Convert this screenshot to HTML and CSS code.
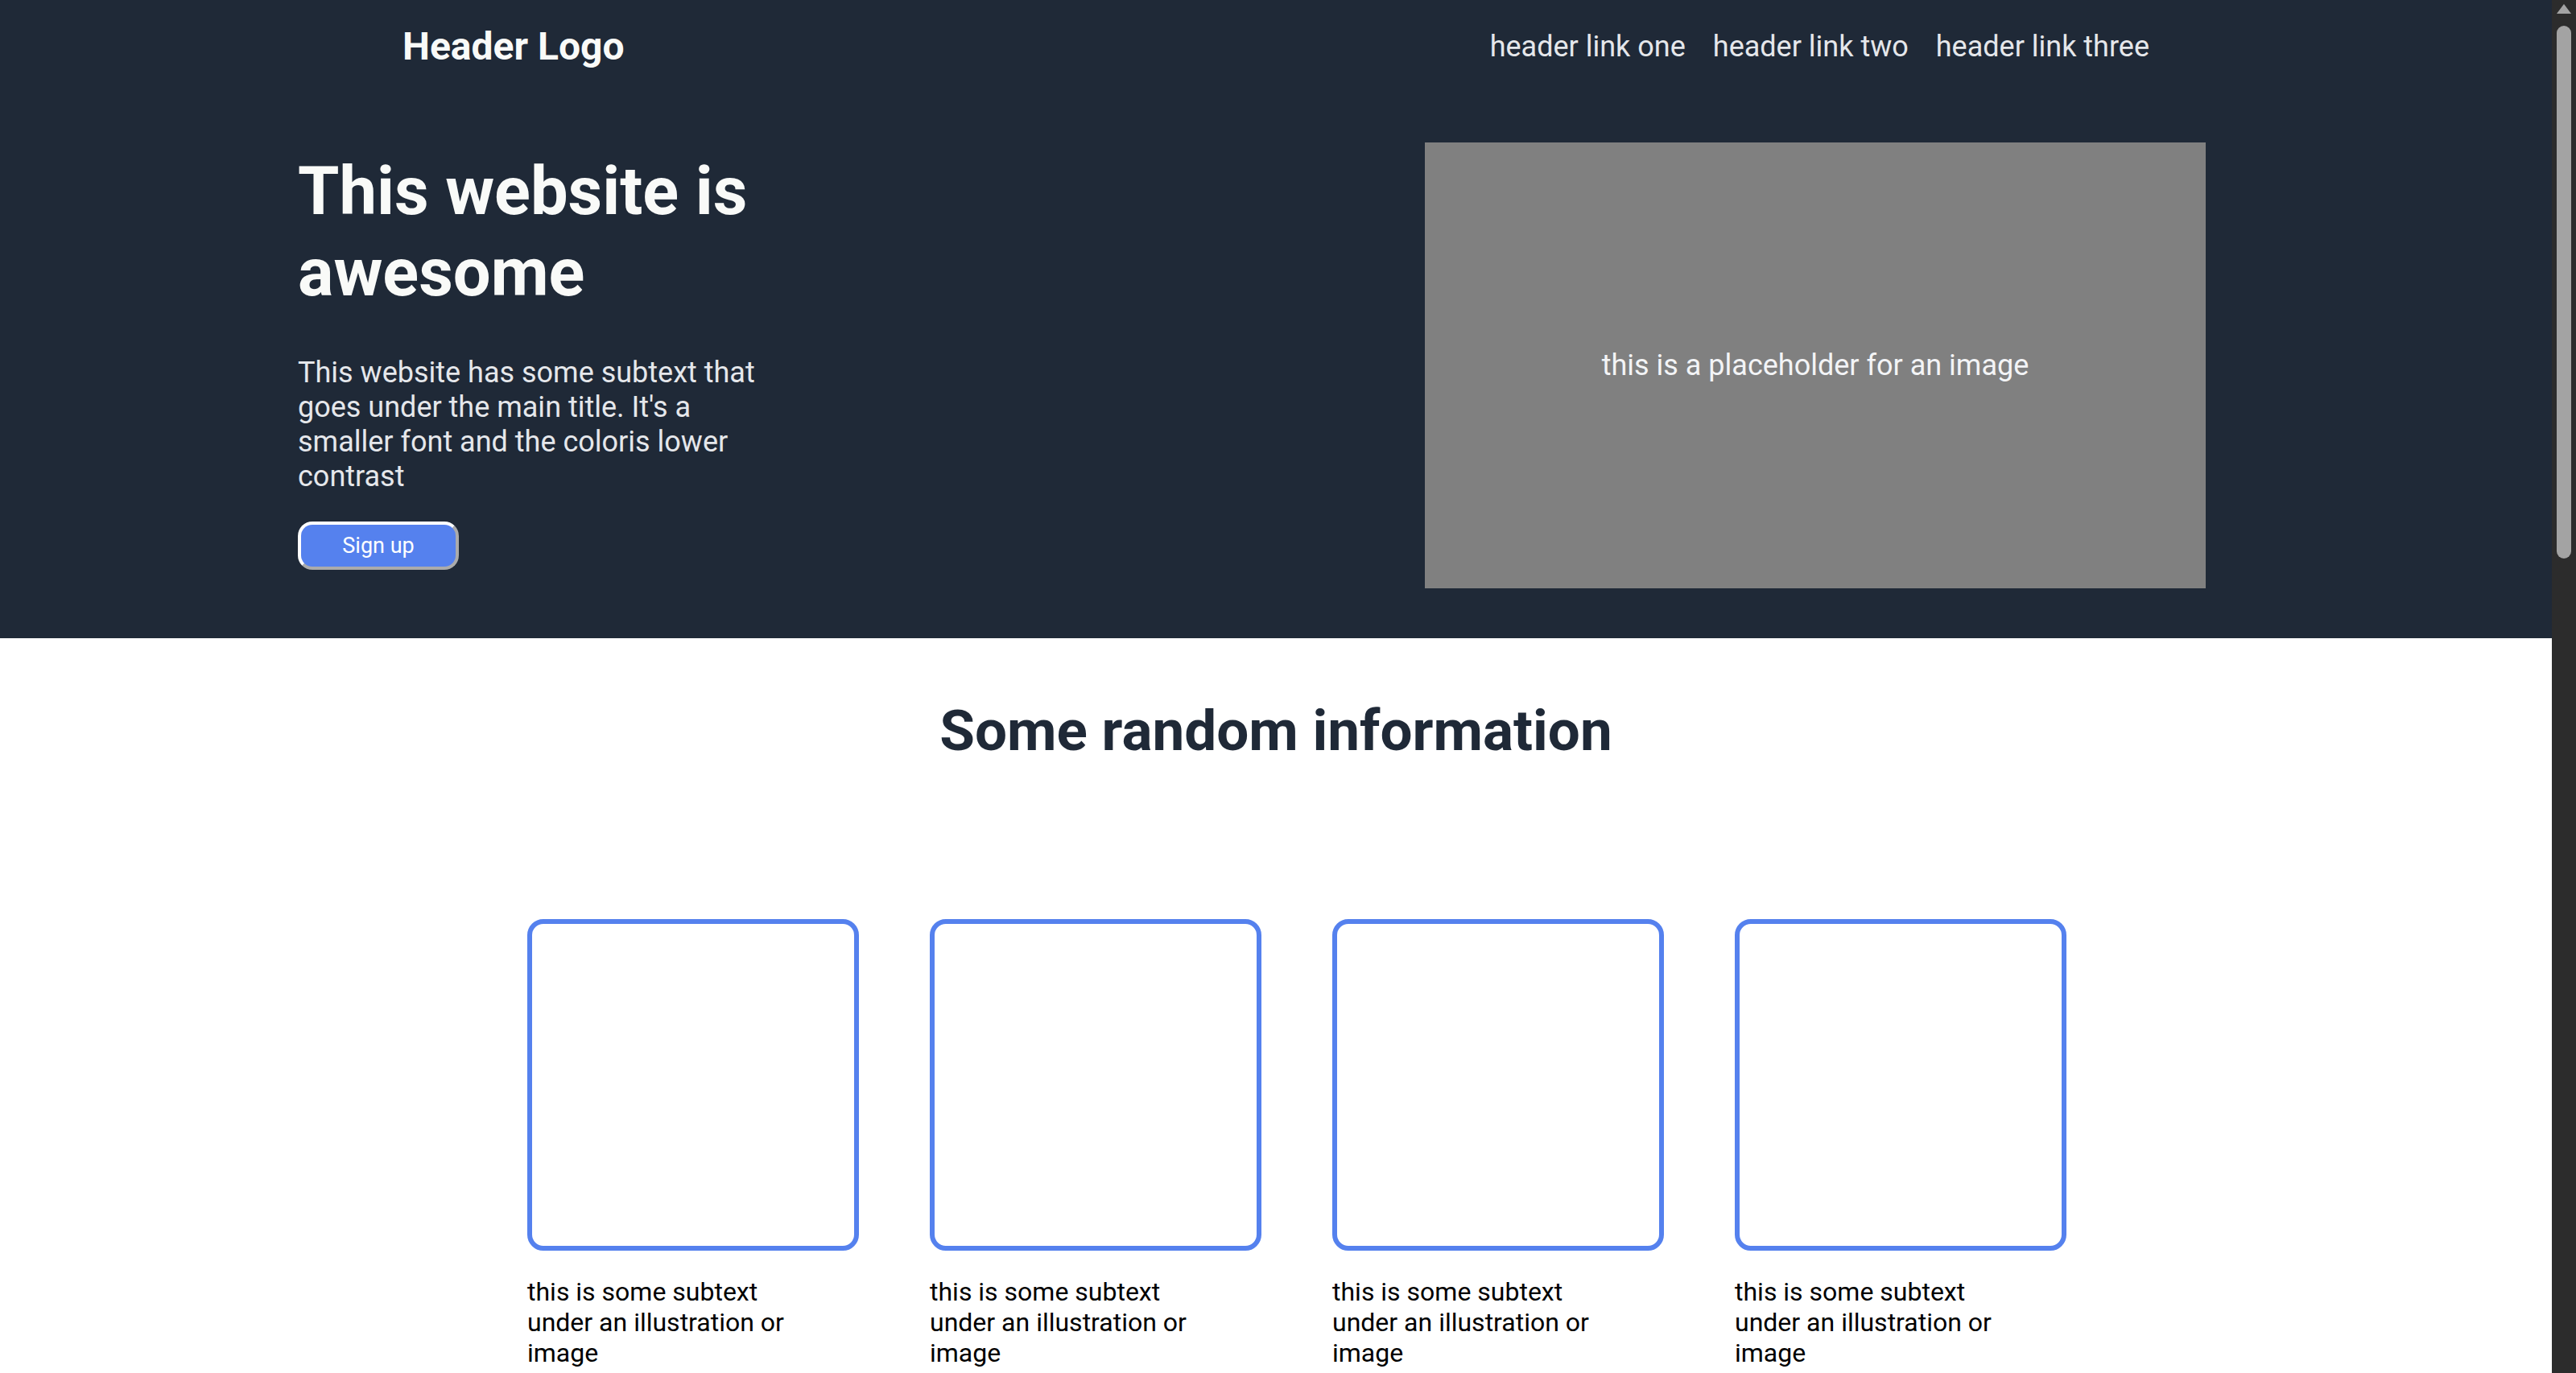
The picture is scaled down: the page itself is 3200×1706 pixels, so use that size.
FILE: index.html
```html
<!DOCTYPE html>
<html lang="en">
<head>
<meta charset="utf-8">
<title>Landing Page</title>
<link rel="stylesheet" href="styles.css">
</head>
<body>
<header class="site-header">
  <div class="header-inner">
    <div class="logo">Header Logo</div>
    <nav class="nav">
      <a href="#" class="nav-link">header link one</a>
      <a href="#" class="nav-link">header link two</a>
      <a href="#" class="nav-link">header link three</a>
    </nav>
  </div>
</header>

<section class="hero">
  <div class="hero-inner">
    <div class="hero-text">
      <h1 class="hero-title">This website is awesome</h1>
      <p class="hero-sub">This website has some subtext that goes under the main title. It's a smaller font and the coloris lower contrast</p>
      <button class="btn" type="button">Sign up</button>
    </div>
    <div class="hero-image">this is a placeholder for an image</div>
  </div>
</section>

<section class="info">
  <h2 class="info-title">Some random information</h2>
  <div class="cards">
    <div class="card">
      <div class="card-box"></div>
      <p class="card-text">this is some subtext under an illustration or image</p>
    </div>
    <div class="card">
      <div class="card-box"></div>
      <p class="card-text">this is some subtext under an illustration or image</p>
    </div>
    <div class="card">
      <div class="card-box"></div>
      <p class="card-text">this is some subtext under an illustration or image</p>
    </div>
    <div class="card">
      <div class="card-box"></div>
      <p class="card-text">this is some subtext under an illustration or image</p>
    </div>
  </div>
</section>

<section class="quote">
  <blockquote class="quote-text">This is an inspiring quote, or a testimonial from a customer. Maybe it's just filling up space, or maybe people will actually read it. Who knows? All I know is that it looks nice.</blockquote>
  <p class="quote-author">-Thor, God of Thunder</p>
</section>

<section class="cta">
  <div class="cta-box">
    <div class="cta-copy">
      <h3 class="cta-title">Call to action! It's time!</h3>
      <p class="cta-sub">Sign up for our product by clicking that button right over there!</p>
    </div>
    <button class="btn" type="button">Sign up</button>
  </div>
</section>

<footer class="site-footer">Copyright © The Odin Project 2021</footer>

<div class="scrollbar" aria-hidden="true">
  <div class="scrollbar-arrow"></div>
  <div class="scrollbar-thumb"></div>
</div>
</body>
</html>
```

FILE: styles.css
```css
html {
  background: #ffffff;
}

body {
  margin: 0;
  padding-right: 30px;
  font-family: Roboto, "Liberation Sans", sans-serif;
  color: #000000;
}

/* Browser-style vertical scrollbar drawn over the right edge */
.scrollbar {
  position: fixed;
  top: 0;
  right: 0;
  width: 30px;
  height: 100vh;
  background: #2c2c2c;
  display: flex;
  flex-direction: column;
  align-items: center;
}

.scrollbar-arrow {
  margin-top: 5px;
  width: 0;
  height: 0;
  border-left: 9px solid transparent;
  border-right: 9px solid transparent;
  border-bottom: 12px solid #a3a3a3;
}

.scrollbar-thumb {
  margin-top: 15px;
  width: 18px;
  height: 662px;
  border-radius: 9px;
  background: #a3a3a3;
}

/* Header */
.site-header {
  background: #1f2937;
}

.header-inner {
  width: 2170px;
  margin: 0 auto;
  padding: 29px 0;
  display: flex;
  justify-content: space-between;
  align-items: center;
}

.logo {
  font-size: 48px;
  font-weight: 700;
  color: #f9faf8;
}

.nav {
  display: flex;
  gap: 34px;
}

.nav-link {
  font-size: 36px;
  color: #e5e7eb;
  text-decoration: none;
}

/* Hero */
.hero {
  background: #1f2937;
}

.hero-inner {
  display: flex;
  justify-content: space-between;
  align-items: flex-start;
  padding: 62px 430px 62px 370px;
}

.hero-text {
  width: 600px;
  padding-top: 10px;
}

.hero-title {
  margin: 0;
  font-size: 83px;
  font-weight: 700;
  line-height: 101px;
  color: #f9faf8;
}

.hero-sub {
  margin: 53px 0 0;
  font-size: 36px;
  line-height: 43px;
  color: #e5e7eb;
}

.btn {
  display: block;
  margin-top: 34px;
  width: 200px;
  height: 60px;
  padding: 0;
  font-family: Roboto, "Liberation Sans", sans-serif;
  font-size: 27px;
  color: #ffffff;
  background: #5581ee;
  border: 4px outset #ffffff;
  border-radius: 18px;
}

.hero-image {
  width: 970px;
  height: 554px;
  background: #808080;
  display: flex;
  align-items: center;
  justify-content: center;
  font-size: 36px;
  color: #f3f4f6;
}

/* Info */
.info {
  padding: 73px 0 300px;
}

.info-title {
  margin: 0;
  text-align: center;
  font-size: 71px;
  font-weight: 700;
  line-height: normal;
  color: #1f2937;
}

.cards {
  margin-top: 193px;
  display: flex;
  justify-content: center;
  gap: 140px;
}

.card {
  width: 360px;
}

.card-box {
  width: 400px;
  height: 400px;
  border: 6px solid #5581ee;
  border-radius: 20px;
}

.card-text {
  margin: 32px 0 0;
  font-size: 32px;
  color: #000000;
}

/* Quote */
.quote {
  background: #e5e7eb;
  padding: 600px 0;
  display: flex;
  flex-direction: column;
  align-items: center;
}

.quote-text {
  margin: 0;
  width: 1600px;
  font-size: 72px;
  font-style: italic;
  font-weight: 300;
  color: #1f2937;
}

.quote-author {
  width: 1600px;
  margin: 40px 0 0;
  text-align: right;
  font-size: 44px;
  font-weight: 700;
  color: #1f2937;
}

/* CTA */
.cta {
  padding: 900px 0;
  display: flex;
  justify-content: center;
}

.cta-box {
  width: 2000px;
  padding: 100px 240px;
  box-sizing: border-box;
  background: #3882f6;
  border-radius: 20px;
  display: flex;
  justify-content: space-between;
  align-items: center;
  color: #e5e7eb;
}

.cta-title {
  margin: 0;
  font-size: 44px;
  color: #f9faf8;
}

.cta-sub {
  margin: 12px 0 0;
  font-size: 32px;
}

.cta-box .btn {
  margin-top: 0;
}

/* Footer */
.site-footer {
  background: #1f2937;
  color: #e5e7eb;
  text-align: center;
  font-size: 32px;
  padding: 400px 0;
}
```
